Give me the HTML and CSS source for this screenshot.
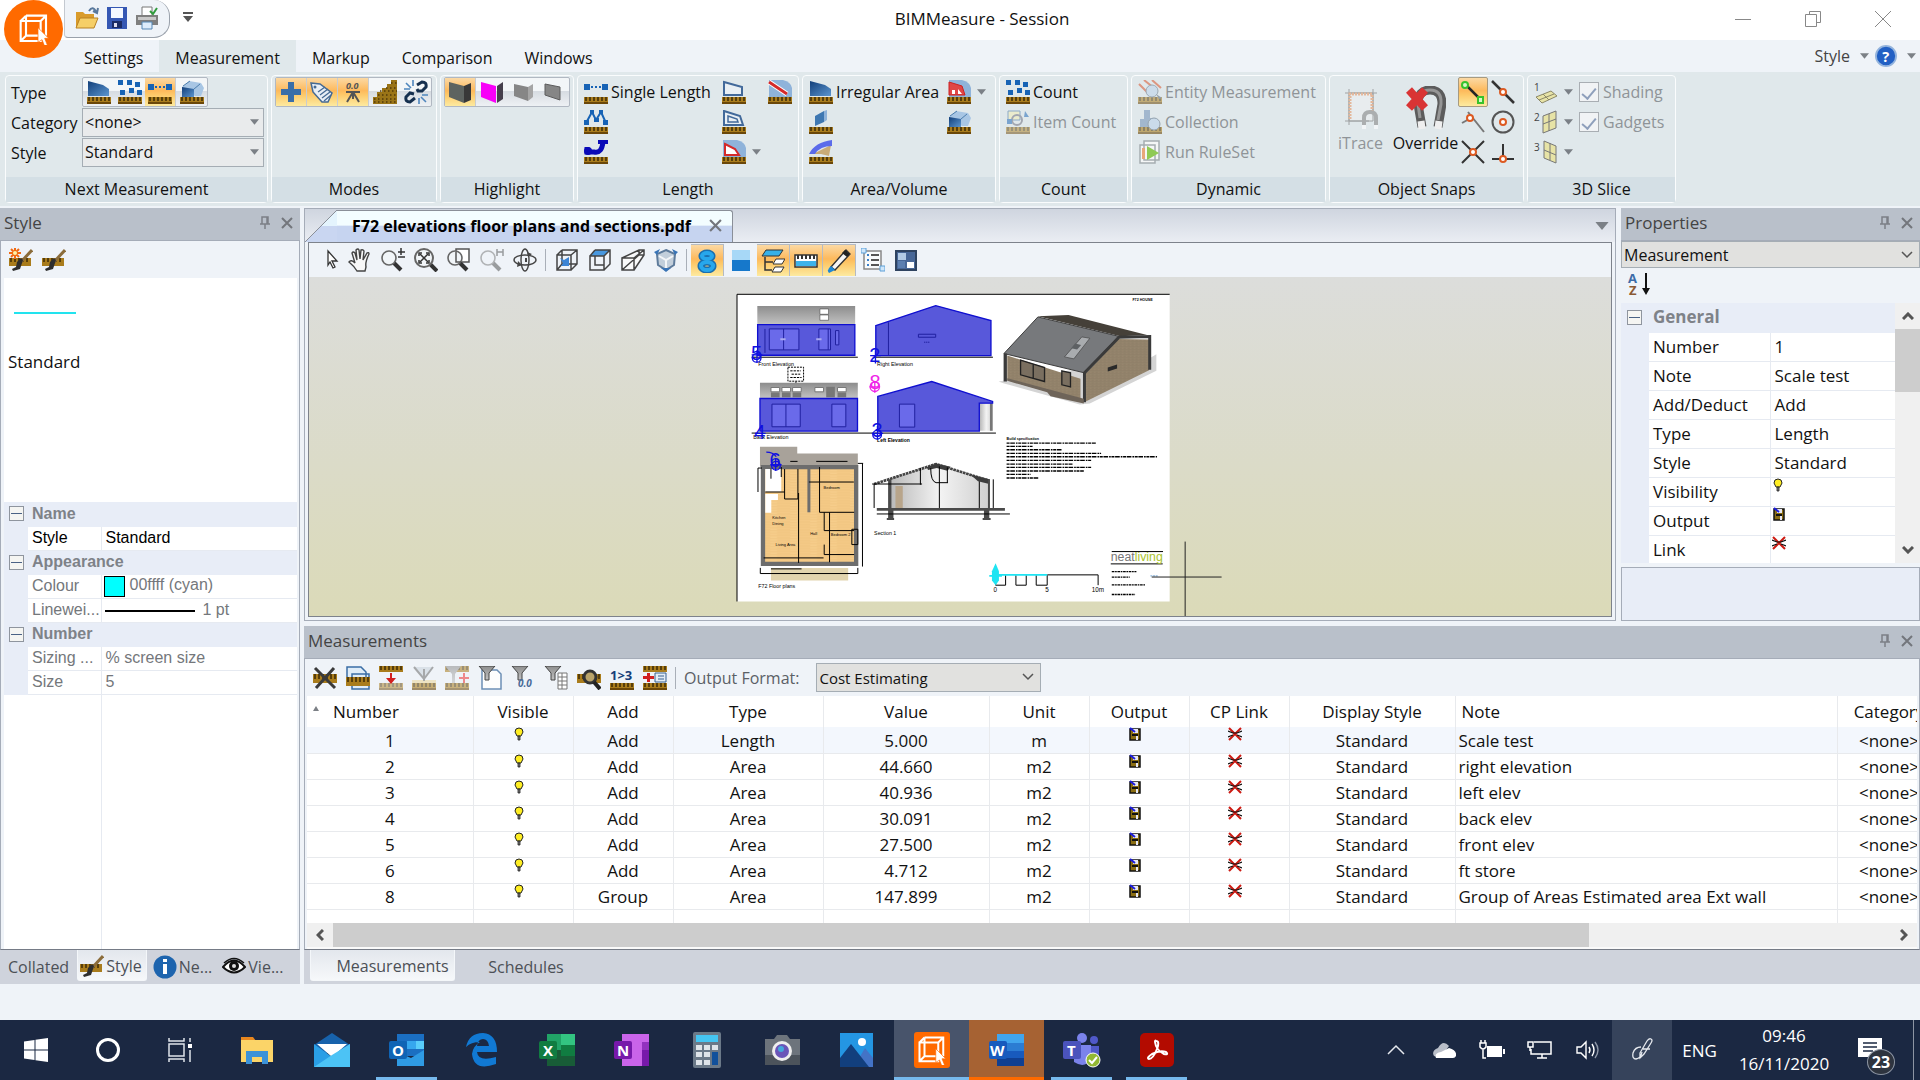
FILE: index.html
```html
<!DOCTYPE html>
<html lang="en">
<head>
  <meta charset="UTF-8">
  <meta name="viewport" content="width=device-width, initial-scale=1.0">
  <title>BIMMeasure - Session</title>
  <link rel="stylesheet" href="styles.css">
</head>
<body>
  <!-- icon sprite -->
  <svg class="sprite" aria-hidden="true">
    <defs>
      <linearGradient id="gBlue" x1="0" y1="0" x2="1" y2="1"><stop offset="0" stop-color="#123f7a"/><stop offset="1" stop-color="#5b95cf"/></linearGradient>
      <linearGradient id="gGrey" x1="0" y1="0" x2="0" y2="1"><stop offset="0" stop-color="#8d8d8d"/><stop offset="1" stop-color="#c2c2c2"/></linearGradient>
      <linearGradient id="gWall" x1="0" y1="0" x2="1" y2="0"><stop offset="0" stop-color="#b9b9b9"/><stop offset=".5" stop-color="#f3f3f3"/><stop offset="1" stop-color="#cfcfcf"/></linearGradient>
      <pattern id="pWood" width="60" height="8" patternUnits="userSpaceOnUse"><rect width="60" height="8" fill="#f6cd8b"/><path d="M0 2h60M20 6h40" stroke="#e8b76d"/></pattern>
      <pattern id="pBrick" width="12" height="8" patternUnits="userSpaceOnUse"><rect width="12" height="8" fill="#97866e"/><path d="M0 2h12M5 6h7" stroke="#7c6d58"/></pattern>
      <pattern id="pClad" width="6" height="6" patternUnits="userSpaceOnUse"><rect width="6" height="6" fill="#5a5adc"/><path d="M0 3h6" stroke="#4b4bcb"/></pattern>
    </defs>
    <symbol id="ruler" viewBox="0 0 24 24"><path fill="#a97c1c" d="M0 17h24v7H0z"/><path fill="#6b4708" d="M0 22h24v2H0z"/><path stroke="#3d2a06" stroke-width="1.5" d="M2 17v4M6 17v4M10 17v4M14 17v4M18 17v4M22 17v4"/></symbol>
    <symbol id="i-area" viewBox="0 0 24 24"><path fill="url(#gBlue)" d="M1 1l15 4 6 4v7H1z"/><use href="#ruler"/></symbol>
    <symbol id="i-count" viewBox="0 0 24 24"><path fill="#1763b5" d="M0 0h5v5H0zM9 0h5v5H9zM17 2h5v5h-5zM2 10h5v5H2zM11 8h5v5h-5zM19 10h5v5h-5z"/><use href="#ruler"/></symbol>
    <symbol id="i-line" viewBox="0 0 24 24"><path fill="#1763b5" d="M0 4h6v6H0zM18 4h6v6h-6z"/><path stroke="#1763b5" stroke-width="2" stroke-dasharray="2 2" d="M7 7h11"/><use href="#ruler"/></symbol>
    <symbol id="i-volume" viewBox="0 0 24 24"><path fill="#a8c6e4" d="M2 7l7-6 12 2 3 5-3 8h-6z"/><path fill="url(#gBlue)" d="M2 7l12 2v8H2z"/><path fill="none" stroke="#4e7fae" d="M14 9l6-5M3 6l7-5"/><use href="#ruler"/></symbol>
    <symbol id="i-poly" viewBox="0 0 24 24"><path fill="none" stroke="#1763b5" stroke-width="2" d="M2 13L8 2l4 8 5-8 5 11"/><path fill="#1763b5" d="M0 10h5v5H0zM6 0h4v4H6zM10 8h5v4h-5zM15 0h4v4h-4zM19 10h5v5h-5z"/><use href="#ruler"/></symbol>
    <symbol id="i-arc" viewBox="0 0 24 24"><path fill="none" stroke="#0a0ab8" stroke-width="5" d="M3 7v5h7q8 2 9-11"/><path fill="#0a0ab8" d="M14 0h10v4H14z"/><circle cx="4" cy="11" r="4" fill="#0a0ab8"/><use href="#ruler"/></symbol>
    <symbol id="i-perim" viewBox="0 0 24 24"><path fill="#e9eff4" stroke="#42699a" stroke-width="2" d="M2 2l18 5v8H2z"/><use href="#ruler"/></symbol>
    <symbol id="i-perim2" viewBox="0 0 24 24"><path fill="#e9eff4" stroke="#42699a" stroke-width="2" d="M2 1l16 5 3 9H2z"/><path fill="none" stroke="#42699a" stroke-width="1.5" d="M6 6l9 3 1 3H6z"/><use href="#ruler"/></symbol>
    <symbol id="i-redline" viewBox="0 0 24 24"><path fill="#8fb3da" d="M1 0h14q8 2 9 8v9H1z"/><path stroke="#fff" stroke-width="5" d="M1 2l18 12"/><path stroke="#d42a2a" stroke-width="3" d="M1 2l18 12"/><use href="#ruler"/></symbol>
    <symbol id="i-redpoly" viewBox="0 0 24 24"><path fill="#8fb3da" d="M1 0h14q8 2 9 8v9H1z"/><path fill="#fff" stroke="#d42a2a" stroke-width="2" d="M3 4l10 5 4 6H3z"/><use href="#ruler"/></symbol>
    <symbol id="i-redfill" viewBox="0 0 24 24"><path fill="#8fb3da" d="M2 0h13q8 2 9 8v9H2z"/><path fill="#e04646" stroke="#c22" d="M2 2l13 4 3 9H2z"/><path fill="#fff" d="M5 10h3v4H5zM11 9l4 5h-4z"/><use href="#ruler"/></symbol>
    <symbol id="i-wallarea" viewBox="0 0 24 24"><path fill="#3f78b2" d="M6 6l9-5v11l-9 4z"/><path fill="#8fb3da" d="M15 1l3-1v10l-3 2z"/><use href="#ruler"/></symbol>
    <symbol id="i-roof" viewBox="0 0 24 24"><path fill="#c9ab77" d="M4 14l18-9-2 11-8-2z"/><path fill="#5b6bea" d="M0 14Q6 2 23 0v6q-12 0-17 8z"/><use href="#ruler"/></symbol>
    <symbol id="i-item" viewBox="0 0 24 24"><g opacity=".5"><path fill="#f4eeb0" stroke="#3b6ea5" d="M2 1h12v9H2z"/><circle cx="11" cy="10" r="5" fill="none" stroke="#667" stroke-width="2"/><path fill="#1763b5" d="M19 1l4 6h-5zM1 9h5v5H1z"/><use href="#ruler"/></g></symbol>
    <symbol id="i-plus" viewBox="0 0 24 24"><path fill="#3a6ea8" d="M9 2h6v7h7v6h-7v7H9v-7H2V9h7z"/></symbol>
    <symbol id="i-tag" viewBox="0 0 24 24"><path fill="#e8eef5" stroke="#456a94" stroke-width="1.5" d="M1 3l9 1 12 9-4 9-6 0L3 12z"/><path stroke="#456a94" stroke-width="1.3" d="M8 12l7-5M10 15l8-6M12 18l8-6M14 21l7-6"/><circle cx="5" cy="7" r="1.5" fill="#456a94"/></symbol>
    <symbol id="i-steps" viewBox="0 0 24 24"><path fill="#9a7417" d="M0 24v-7h4v-5h5V8h5V4h4V0h6v24z"/><path stroke="#51390a" stroke-width="1.400" stroke-dasharray="1.500 2.500" d="M1 19h23M1 22h23M5 15h19M7 11h17M13 8h11M18 3h6"/></symbol>
    <symbol id="i-chain" viewBox="0 0 24 24"><g fill="none" stroke="#16304f" stroke-width="3"><path d="M10 14l-4-1-4 4q-1 5 4 5l5-4M13 9l1 2h4l4-4q1-5-4-5l-5 3"/></g><path stroke="#4f86bd" stroke-width="1.6" d="M2 3l5 5M9 0v6M0 9h6M22 22l-5-5M15 24v-6M24 15h-6"/></symbol>
    <symbol id="i-wall" viewBox="0 0 24 24"><path fill="#5d6360" d="M1 2l15 4v17L1 17z"/><path fill="#383838" d="M16 6l7-3v17l-7 3z"/></symbol>
    <symbol id="i-wallpink" viewBox="0 0 24 24"><path fill="#f800f8" d="M1 2l15 4v17L1 17z"/><path fill="#463f4c" d="M17 6l6-4v17l-6 4z"/></symbol>
    <symbol id="i-wallgrey" viewBox="0 0 24 24"><path fill="#868686" d="M3 4l14 3v14L3 16z"/><path fill="#a5a5a5" d="M17 7l5-3v13l-5 4z"/></symbol>
    <symbol id="i-wallthin" viewBox="0 0 24 24"><path fill="#868686" stroke="#5c5c5c" d="M3 4l15 3v13L3 15z"/></symbol>
    <symbol id="i-entity" viewBox="0 0 24 24"><g opacity=".55"><use href="#ruler"/><path stroke="#d9542b" stroke-width="2" d="M1 4l9 9M6 0l10 8M14 0l9 8"/><circle cx="14" cy="11" r="6" fill="#bcd3ea" stroke="#678"/><path fill="#567" d="M18 14l6 4-3 1z"/></g></symbol>
    <symbol id="i-collect" viewBox="0 0 24 24"><g opacity=".6"><use href="#ruler"/><path fill="#7a98bb" d="M6 0h6v8h6v9H2V9h4z"/><circle cx="16" cy="14" r="6" fill="#bcd3ea" stroke="#678"/></g></symbol>
    <symbol id="i-run" viewBox="0 0 24 24"><path fill="#f4f6f6" stroke="#a5adb1" stroke-width="1.5" d="M6 1h15v19H6zM2 5h15v18H2z"/><path fill="#e8a77a" d="M4 8h3v11H4z"/><path fill="#8fca55" d="M9 6l12 7-12 7z"/></symbol>
    <symbol id="i-drop" viewBox="0 0 10 6"><path fill="#7b8086" d="M0 0h10L5 6z"/></symbol>
    <symbol id="i-itrace" viewBox="0 0 36 42"><g opacity=".6"><path fill="#eef0f1" stroke="#777" d="M6 5h24v28H6zM2 5h32M2 33h24M6 1v36M30 1v24"/><path fill="none" stroke="#e59867" stroke-width="3" stroke-dasharray="2 1" d="M7 31V6h22v20"/><path fill="none" stroke="#888" stroke-width="4" d="M21 40V30q0-6 6-6t6 6v10"/><path stroke="#fff" stroke-width="4" d="M21 37v4M33 37v4"/></g></symbol>
    <symbol id="i-magnet" viewBox="0 0 40 46"><path fill="none" stroke="#5c5c5c" stroke-width="9" d="M16 41L12 18q0-14 12-14t12 14l-4 23"/><path fill="none" stroke="#969696" stroke-width="3" d="M14 32L12 18q0-14 12-14t11 14l-3 16"/><path stroke="#efefef" stroke-width="7" d="M15 35l1 8M33 35l-1 8"/><path stroke="#d93434" stroke-width="8" d="M3 4l16 18M19 4L3 22"/></symbol>
    <symbol id="i-snapend" viewBox="0 0 24 24"><path stroke="#262626" stroke-width="2.5" d="M5 5l14 14"/><g fill="#d9f7c8" stroke="#36c22c" stroke-width="2"><circle cx="4" cy="5" r="3"/><path d="M17 17h5v6h-5z"/></g></symbol>
    <symbol id="i-snapmid" viewBox="0 0 24 24"><path stroke="#333" stroke-width="2.5" d="M1 1l22 22"/><circle cx="12" cy="12" r="3" fill="#fff" stroke="#dd5a22" stroke-width="2"/></symbol>
    <symbol id="i-snapnear" viewBox="0 0 24 24"><path stroke="#777" stroke-width="2" d="M7 2l16 20M1 13l9-5"/><circle cx="9" cy="8" r="3" fill="#fff" stroke="#dd5a22" stroke-width="2"/></symbol>
    <symbol id="i-snapcen" viewBox="0 0 24 24"><circle cx="12" cy="12" r="10.500" fill="none" stroke="#555" stroke-width="2"/><circle cx="12" cy="12" r="3" fill="#fff" stroke="#dd5a22" stroke-width="2"/></symbol>
    <symbol id="i-snapint" viewBox="0 0 24 24"><path stroke="#333" stroke-width="2" d="M1 1l22 22M23 1L1 23"/><circle cx="12" cy="12" r="3" fill="#fff" stroke="#dd5a22" stroke-width="2"/></symbol>
    <symbol id="i-snapperp" viewBox="0 0 24 24"><path stroke="#333" stroke-width="2" d="M1 19h22M12 4v15"/><circle cx="12" cy="19" r="3" fill="#fff" stroke="#dd5a22" stroke-width="2"/></symbol>
    <symbol id="i-open" viewBox="0 0 24 24"><path fill="#d99b2b" d="M1 6h7l2 2h9v14H1z"/><path fill="#f6cf68" stroke="#b98122" d="M5 12h18l-4 10H1z"/><path fill="none" stroke="#59789c" stroke-width="2" d="M14 5q4-6 7 1M18 5l4 2 1-5"/></symbol>
    <symbol id="i-save" viewBox="0 0 24 24"><path fill="#3557b3" d="M2 1h20v22H2z"/><path fill="#f4f8ff" d="M6 2h12v10H6z"/><path fill="#1b2c66" d="M7 15h10v7H7z"/><path fill="#dde" d="M9 17h3v4H9z"/></symbol>
    <symbol id="i-print" viewBox="0 0 24 24"><path fill="#fff" stroke="#777" d="M7 1h10v9H7z"/><path fill="#7f7f7f" d="M1 9h22v10H1z"/><path fill="#c9c9c9" d="M3 11h18v3H3z"/><path fill="#dcecfb" stroke="#5587b5" d="M7 16h10v7H7z"/><path fill="none" stroke="#2f9b3b" stroke-width="2" d="M15 5l3 3 4-6"/></symbol>
    <symbol id="i-cubelogo" viewBox="0 0 24 24"><g fill="none" stroke="#fff" stroke-width="1.600"><path d="M2 6h15v15H2zM6 2h15v15M6 2v15h11M2 6l4-4M17 6l4-4M2 21l4-4"/></g><path fill="#fff" stroke="#ff6a00" stroke-width=".5" d="M15 11l8 8h-3l2 5-2 1-2-5-3 2z"/></symbol>
    <symbol id="i-pin" viewBox="0 0 12 14"><path fill="none" stroke="#7c7f86" stroke-width="1.500" d="M3 1h6v7H3zM8 1v7M1 8h10M6 8v5"/></symbol>
    <symbol id="i-x" viewBox="0 0 12 12"><path stroke="#73767c" stroke-width="2" d="M1 1l10 10M11 1L1 11"/></symbol>
    <symbol id="i-brush" viewBox="0 0 24 24"><path fill="#a97c1c" d="M0 10h22v8H0z"/><path stroke="#3d2a06" stroke-width="1.500" d="M2 10v4M6 10v4M10 10v4M14 10v4M18 10v4"/><path stroke="#8b6c3a" stroke-width="3" d="M23 2L12 14"/><path fill="#2e2e2e" d="M14 12l-3 9-7 2-1-2 4-2 1-5 4-4z"/></symbol>
    <symbol id="i-brushnew" viewBox="0 0 24 24"><use href="#i-brush"/><path stroke="#f26a12" stroke-width="2" d="M6 0v11M0 5h12M2 1l8 8M10 1L2 9"/><circle cx="6" cy="5" r="2" fill="#fff3a8"/></symbol>
    <symbol id="i-cursor" viewBox="0 0 24 24"><path fill="#fff" stroke="#333" stroke-width="1.300" d="M8 3l9 10h-5l3 6-2 1-3-6-2 3z"/></symbol>
    <symbol id="i-hand" viewBox="0 0 24 24"><path fill="#f8f8f8" stroke="#444" stroke-width="1.400" d="M9 23q-3-5-8-9 2-3 6 1L4 5q1-2 3 0l2 7-1-10q2-2 3 0l1 9 1-9q2-1 3 1l-1 9 4-7q2-1 2 1-4 8-3 13l-1 4z"/></symbol>
    <symbol id="i-lens" viewBox="0 0 24 24"><path stroke="#333" stroke-width="4" d="M13 15l7 7"/><circle cx="8" cy="10" r="7" fill="#f1f5f8" stroke="#666" stroke-width="1.600"/></symbol>
    <symbol id="i-zoomin" viewBox="0 0 24 24"><use href="#i-lens"/><path stroke="#333" stroke-width="1.500" d="M17 4h7M20 0v7M17 9h7"/></symbol>
    <symbol id="i-zoomall" viewBox="0 0 24 24"><path stroke="#333" stroke-width="4" d="M16 16l7 7"/><circle cx="10" cy="10" r="9" fill="#f1f5f8" stroke="#666" stroke-width="2"/><path stroke="#333" stroke-width="1.500" d="M6 6l8 8M14 6l-8 8"/><path fill="none" stroke="#333" stroke-width="1.500" d="M5 8V5h3M12 5h3v3M15 12v3h-3M8 15H5v-3"/></symbol>
    <symbol id="i-zoomwin" viewBox="0 0 24 24"><path fill="#fff" stroke="#555" stroke-width="1.500" d="M9 1h13v13H9z"/><use href="#i-lens"/><path fill="none" stroke="#555" stroke-width="1.500" d="M9 4v10h5"/></symbol>
    <symbol id="i-zoomh" viewBox="0 0 24 24"><g opacity=".45"><use href="#i-lens"/><path stroke="#333" stroke-width="1.500" d="M17 1v7M23 1v7M17 4h6"/></g></symbol>
    <symbol id="i-orbit" viewBox="0 0 24 24"><g fill="none" stroke="#444" stroke-width="1.400"><ellipse cx="12" cy="12" rx="11" ry="5"/><ellipse cx="12" cy="12" rx="4" ry="11"/></g><path fill="#444" d="M14 4l5 2-4 3zM5 13l4 4-5 2zM12 10v4h2v-4z"/></symbol>
    <symbol id="i-cubein" viewBox="0 0 24 24"><path fill="none" stroke="#444" stroke-width="1.500" d="M2 7h14v15H2zM7 2h15v14l-6 6M2 7l5-5M16 7l6-5M7 2v14h15M2 22l5-6"/><path fill="#3c84d4" d="M5 10l4 2 5-3v9H6l2-3z"/></symbol>
    <symbol id="i-cubetop" viewBox="0 0 24 24"><path fill="#4898df" d="M2 8l5-6h15l-6 6z"/><path fill="none" stroke="#444" stroke-width="1.500" d="M2 8h14v14H2zM7 2h15v14l-6 6M2 8l5-6M16 8l6-6M7 8v9h9"/></symbol>
    <symbol id="i-persp" viewBox="0 0 24 24"><path fill="#fafafa" stroke="#444" stroke-width="1.500" d="M1 10h12v12H1zM1 10L18 2h5v5L13 22M13 10l10-8M1 22L18 7V2M18 7h5"/></symbol>
    <symbol id="i-cubesel" viewBox="0 0 24 24"><path fill="#c3cfdb" stroke="#5e7b9b" stroke-width="2" d="M12 2l9 4-1 11-8 5-8-5L3 6z"/><path fill="none" stroke="#f4f6f8" stroke-width="2" d="M5 8l7 4 7-4M12 12v8"/><path fill="#3974b6" d="M0 4l6-3-3 6zM24 4l-6-3 3 6zM12 24l-5-4h10z"/></symbol>
    <symbol id="i-eight" viewBox="0 0 24 24"><g fill="none" stroke="#1b6fae" stroke-width="7"><ellipse cx="12" cy="7" rx="5" ry="3"/><ellipse cx="12" cy="17" rx="6" ry="4"/></g><g fill="none" stroke="#27a7ec" stroke-width="4"><ellipse cx="12" cy="7" rx="5" ry="3"/><ellipse cx="12" cy="17" rx="6" ry="4"/></g></symbol>
    <symbol id="i-water" viewBox="0 0 24 24"><path fill="#a7d8f7" d="M3 2h18v10H3z"/><path fill="#1678cb" d="M3 12h18v11H3z"/></symbol>
    <symbol id="i-layers" viewBox="0 0 24 24"><path fill="#38b1e8" stroke="#333" d="M5 1h17l-4 6H1z"/><path fill="none" stroke="#333" stroke-width="1.500" d="M4 8v13h7M4 13h8"/><path fill="#fff" stroke="#333" d="M15 10h9l-3 5h-9zM14 18h9l-3 5h-9z"/></symbol>
    <symbol id="i-scale" viewBox="0 0 24 24"><path fill="#fff" stroke="#333" stroke-width="1.500" d="M1 6h22v12H1z"/><path fill="#3eb3ea" d="M2 12h20v5H2z"/><path stroke="#333" stroke-width="2" d="M4 6v4M8 6v4M12 6v4M16 6v4M20 6v4"/></symbol>
    <symbol id="i-pencil" viewBox="0 0 24 24"><path fill="#f6f6f6" stroke="#333" stroke-width="1.400" d="M19 1l4 4L8 21l-4-3z"/><path fill="#222" d="M18 1l5 4-3 3-5-4z"/><path fill="#1e88d4" d="M4 17l4 4-6 3q-3-3 2-7z"/></symbol>
    <symbol id="i-tree" viewBox="0 0 24 24"><path fill="#f8fafb" stroke="#888" stroke-width="1.500" d="M3 3h17v18H3z"/><path stroke="#555" stroke-width="2" d="M10 7h8M10 12h8M10 17h8"/><path stroke="#3a7fca" stroke-width="2" d="M6 7h2M6 12h2M6 17h2"/><path fill="#cfe6fa" stroke="#5da0d8" d="M0 0h5v5H0zM19 18h5v5h-5z"/></symbol>
    <symbol id="i-sheet" viewBox="0 0 24 24"><path fill="#486797" stroke="#2f4360" stroke-width="2" d="M2 3h20v19H2z"/><path fill="#b3cbe5" d="M4 5h8v7H4z"/><path fill="#fff" d="M13 14h7v6h-7z"/><path fill="#5c7fb0" d="M4 13h7v7H4z"/></symbol>
    <symbol id="bar" viewBox="0 0 24 24"><path fill="#a97c1c" d="M0 8h24v9H0z"/><path stroke="#3d2a06" stroke-width="1.500" d="M2 8v5M6 8v5M10 8v5M14 8v5M18 8v5M22 8v5"/></symbol>
    <symbol id="bartop" viewBox="0 0 24 24"><path fill="#a97c1c" d="M0 0h24v6H0z"/><path stroke="#3d2a06" stroke-width="1.500" d="M2 0v4M6 0v4M10 0v4M14 0v4M18 0v4M22 0v4"/></symbol>
    <symbol id="i-mdel" viewBox="0 0 24 24"><use href="#bar"/><path stroke="#3a3a3a" stroke-width="3" d="M2 2l20 20M21 2L3 22"/></symbol>
    <symbol id="i-mcopy" viewBox="0 0 24 24"><path fill="#dfecf8" stroke="#3b6ea5" stroke-width="1.500" d="M1 1h14l5 5v12H1zM6 8h17v15H6z"/><use href="#bar" y="3"/></symbol>
    <symbol id="i-minsert" viewBox="0 0 24 24"><use href="#bartop"/><g opacity=".5"><use href="#ruler"/></g><path fill="#d21f1f" d="M11 7h2v5h4l-5 6-5-6h4z"/></symbol>
    <symbol id="i-mmerge" viewBox="0 0 24 24"><g opacity=".6"><use href="#ruler"/><path fill="#ecd9a2" d="M0 14h24v3H0z"/><path fill="#cdd6df" stroke="#777" stroke-width="2" d="M2 1l10 12L21 1M12 3v12"/></g></symbol>
    <symbol id="i-mfilt" viewBox="0 0 24 24"><g opacity=".55"><use href="#ruler"/><use href="#bartop"/><path fill="url(#gGrey)" d="M0 0h16l-6 8v9H7V8z"/><path fill="#e33" d="M18 7h2v4h4v2h-4v4h-2v-4h-4v-2h4z"/></g></symbol>
    <symbol id="funnel" viewBox="0 0 24 24"><path fill="url(#gGrey)" stroke="#444" d="M1 0h16l-6 7v7H7V7z"/></symbol>
    <symbol id="i-mfpage" viewBox="0 0 24 24"><path fill="#fdfdfd" stroke="#6c8fb5" stroke-width="1.500" d="M4 4h15l4 4v15H4z"/><use href="#funnel"/></symbol>
    <symbol id="i-mfgrid" viewBox="0 0 24 24"><path fill="#fff" stroke="#777" d="M14 7h9v16h-9zM14 11h9M14 15h9M14 19h9M18 7v16"/><use href="#funnel"/></symbol>
    <symbol id="i-mfind" viewBox="0 0 24 24"><use href="#bar"/><circle cx="13" cy="11" r="6" fill="#b9a36a" stroke="#333" stroke-width="3"/><path stroke="#222" stroke-width="4" d="M17 16l6 7"/></symbol>
    <symbol id="i-madd" viewBox="0 0 24 24"><use href="#bartop"/><use href="#ruler"/><path fill="#d21f1f" d="M4 7h3v3h4v3H7v3H4v-3H0v-3h4z"/><path fill="#e3ecf5" stroke="#36618f" d="M12 7h11v9H12z"/><path stroke="#36618f" d="M15 10h6M15 13h6"/></symbol>
    <symbol id="i-bulb" viewBox="0 0 12 14"><path fill="#ffee22" stroke="#222" d="M6 1q4 0 4 4l-2 4H4L2 5q0-4 4-4z"/><path fill="#777" stroke="#222" stroke-width=".8" d="M5 9h2v4H5z"/></symbol>
    <symbol id="i-disk" viewBox="0 0 14 14"><path fill="#8a6d12" stroke="#111" stroke-width="1.500" d="M2 2h10v11H2z"/><path fill="#e8e8f4" d="M5 2h5v4H5zM8 9h2v4H8z"/><path fill="#111" d="M4 7h6v2H4z"/><path stroke="#1a1ae0" stroke-width="2" d="M2 1l5 4"/></symbol>
    <symbol id="i-cut" viewBox="0 0 14 14"><path stroke="#cc1a12" stroke-width="2" d="M1 1l12 12M13 1L1 13"/><path fill="none" stroke="#111" stroke-width="1.200" d="M0 4l5 2h4l5-2M0 10l5-2M14 10L9 8"/></symbol>
    <symbol id="i-info" viewBox="0 0 24 24"><circle cx="12" cy="12" r="11.500" fill="#1d64ae"/><path fill="#fff" d="M10 9h4v10h-4zM10 4h4v3h-4z"/></symbol>
    <symbol id="i-eye" viewBox="0 0 24 24"><path fill="#fff" stroke="#111" stroke-width="2" d="M1 12q11-13 22 0-11 11-22 0z"/><circle cx="12" cy="11" r="5" fill="#111"/><circle cx="12" cy="11" r="2" fill="#ddd"/><path fill="none" stroke="#111" stroke-width="1.500" d="M2 8Q12-1 22 8"/></symbol>
    <symbol id="i-chev" viewBox="0 0 12 8"><path fill="none" stroke="#555" stroke-width="1.500" d="M1 1l5 5 5-5"/></symbol>
    <symbol id="i-chevb" viewBox="0 0 12 8"><path fill="none" stroke="#555" stroke-width="3" d="M1 1l5 5 5-5"/></symbol>
  </svg>

  <header class="titlebar">
    <button class="app-button" aria-label="Application menu"><svg width="32" height="32"><use href="#i-cubelogo"/></svg></button>
    <div class="quick-access">
      <button aria-label="Open"><svg width="24" height="24"><use href="#i-open"/></svg></button>
      <button aria-label="Save"><svg width="24" height="24"><use href="#i-save"/></svg></button>
      <button aria-label="Print"><svg width="24" height="24"><use href="#i-print"/></svg></button>
    </div>
    <button class="qa-more" aria-label="Customise"><svg width="10" height="10" viewBox="0 0 10 10"><path fill="#555" d="M0 0h10v2H0zM0 4h10L5 10z"/></svg></button>
    <h1>BIMMeasure - Session</h1>
    <div class="window-controls">
      <button aria-label="Minimise"><svg width="16" height="16" viewBox="0 0 16 16"><path stroke="#888" d="M0 8.500h16"/></svg></button>
      <button aria-label="Restore"><svg width="16" height="16" viewBox="0 0 16 16"><path fill="none" stroke="#888" d="M.5 3.500h11v12H.5zM4.500 3V.5h11v11H12"/></svg></button>
      <button aria-label="Close"><svg width="16" height="16" viewBox="0 0 16 16"><path stroke="#888" d="M0 0l16 16M16 0L0 16"/></svg></button>
    </div>
  </header>

  <nav class="ribbon-tabs">
    <a href="#">Settings</a>
    <a href="#" class="active">Measurement</a>
    <a href="#">Markup</a>
    <a href="#">Comparison</a>
    <a href="#">Windows</a>
    <div class="ribbon-help">
      <button>Style <svg width="9" height="6"><use href="#i-drop"/></svg></button>
      <button aria-label="Help"><svg width="22" height="22" viewBox="0 0 24 24"><circle cx="12" cy="12" r="11" fill="#2260c4" stroke="#94b4dd" stroke-width="2"/><text x="8" y="18" font-size="16" font-weight="700" fill="#fff">?</text></svg> <svg width="9" height="6"><use href="#i-drop"/></svg></button>
    </div>
  </nav>

  <section class="ribbon">
    <div class="group g-next">
      <div class="group-body form">
        <span>Type</span>
        <div class="btn-strip">
          <button aria-label="Area"><svg width="24" height="24"><use href="#i-area"/></svg></button>
          <button aria-label="Count"><svg width="24" height="24"><use href="#i-count"/></svg></button>
          <button class="on" aria-label="Length"><svg width="24" height="24"><use href="#i-line"/></svg></button>
          <button aria-label="Volume"><svg width="24" height="24"><use href="#i-volume"/></svg></button>
        </div>
        <label for="category">Category</label>
        <div class="combo"><select id="category"><option>&lt;none&gt;</option></select><svg width="9" height="6"><use href="#i-drop"/></svg></div>
        <label for="style">Style</label>
        <div class="combo"><select id="style"><option>Standard</option></select><svg width="9" height="6"><use href="#i-drop"/></svg></div>
      </div>
      <h2>Next Measurement</h2>
    </div>

    <div class="group g-modes">
      <div class="group-body">
        <div class="btn-strip">
          <button class="on" aria-label="Add"><svg width="24" height="24"><use href="#i-plus"/></svg></button>
          <button class="on" aria-label="Tag"><svg width="24" height="24"><use href="#i-tag"/></svg></button>
          <button class="on" aria-label="Level"><svg width="24" height="24" viewBox="0 0 24 24"><text x="5" y="9" font-size="9" font-weight="700" font-style="italic" fill="#555">0.0</text><path stroke="#555" stroke-width="2" fill="none" d="M5 12h14M12 12l-6 10M12 12l6 10M12 12v7"/></svg></button>
          <button aria-label="Steps"><svg width="24" height="24"><use href="#i-steps"/></svg></button>
          <button aria-label="Unlink"><svg width="24" height="24"><use href="#i-chain"/></svg></button>
        </div>
      </div>
      <h2>Modes</h2>
    </div>

    <div class="group g-highlight">
      <div class="group-body">
        <div class="btn-strip">
          <button class="on" aria-label="Solid"><svg width="24" height="24"><use href="#i-wall"/></svg></button>
          <button aria-label="Coloured"><svg width="24" height="24"><use href="#i-wallpink"/></svg></button>
          <button aria-label="Faded"><svg width="24" height="24"><use href="#i-wallgrey"/></svg></button>
          <button aria-label="Hidden"><svg width="24" height="24"><use href="#i-wallthin"/></svg></button>
        </div>
      </div>
      <h2>Highlight</h2>
    </div>

    <div class="group g-length">
      <div class="group-body columns">
        <div class="col c-wide">
          <button><svg width="24" height="24"><use href="#i-line"/></svg>Single Length</button>
          <button aria-label="Polyline"><svg width="24" height="24"><use href="#i-poly"/></svg></button>
          <button aria-label="Arc"><svg width="24" height="24"><use href="#i-arc"/></svg></button>
        </div>
        <div class="col c-mid">
          <button aria-label="Perimeter"><svg width="24" height="24"><use href="#i-perim"/></svg></button>
          <button aria-label="Inner perimeter"><svg width="24" height="24"><use href="#i-perim2"/></svg></button>
          <button class="split" aria-label="Face perimeter"><svg width="24" height="24"><use href="#i-redpoly"/></svg><svg width="9" height="6"><use href="#i-drop"/></svg></button>
        </div>
        <div class="col">
          <button aria-label="Edge"><svg width="24" height="24"><use href="#i-redline"/></svg></button>
        </div>
      </div>
      <h2>Length</h2>
    </div>

    <div class="group g-area">
      <div class="group-body columns">
        <div class="col c-wide">
          <button><svg width="24" height="24"><use href="#i-area"/></svg>Irregular Area</button>
          <button aria-label="Wall area"><svg width="24" height="24"><use href="#i-wallarea"/></svg></button>
          <button aria-label="Roof area"><svg width="24" height="24"><use href="#i-roof"/></svg></button>
        </div>
        <div class="col c-mid">
          <button class="split" aria-label="Face area"><svg width="24" height="24"><use href="#i-redfill"/></svg><svg width="9" height="6"><use href="#i-drop"/></svg></button>
          <button aria-label="Volume"><svg width="24" height="24"><use href="#i-volume"/></svg></button>
        </div>
      </div>
      <h2>Area/Volume</h2>
    </div>

    <div class="group g-count">
      <div class="group-body columns">
        <div class="col">
          <button><svg width="24" height="24"><use href="#i-count"/></svg>Count</button>
          <button disabled><svg width="24" height="24"><use href="#i-item"/></svg>Item Count</button>
        </div>
      </div>
      <h2>Count</h2>
    </div>

    <div class="group g-dynamic">
      <div class="group-body columns">
        <div class="col">
          <button disabled><svg width="24" height="24"><use href="#i-entity"/></svg>Entity Measurement</button>
          <button disabled><svg width="24" height="24"><use href="#i-collect"/></svg>Collection</button>
          <button disabled><svg width="24" height="24"><use href="#i-run"/></svg>Run RuleSet</button>
        </div>
      </div>
      <h2>Dynamic</h2>
    </div>

    <div class="group g-snaps">
      <div class="group-body columns">
        <button class="big" disabled><svg width="36" height="46"><use href="#i-itrace"/></svg>iTrace</button>
        <button class="big"><svg width="40" height="46"><use href="#i-magnet"/></svg>Override</button>
        <div class="snap-grid">
          <button class="on" aria-label="End point"><svg width="24" height="24"><use href="#i-snapend"/></svg></button>
          <button aria-label="Mid point"><svg width="24" height="24"><use href="#i-snapmid"/></svg></button>
          <button aria-label="Nearest"><svg width="24" height="24"><use href="#i-snapnear"/></svg></button>
          <button aria-label="Centre"><svg width="24" height="24"><use href="#i-snapcen"/></svg></button>
          <button aria-label="Intersection"><svg width="24" height="24"><use href="#i-snapint"/></svg></button>
          <button aria-label="Perpendicular"><svg width="24" height="24"><use href="#i-snapperp"/></svg></button>
        </div>
      </div>
      <h2>Object Snaps</h2>
    </div>

    <div class="group g-slice">
      <div class="group-body columns">
        <div class="col">
          <button class="split" aria-label="Slice 1"><svg width="24" height="24" viewBox="0 0 24 24"><text x="0" y="11" font-size="10" fill="#444">1</text><path fill="#e7e3a6" stroke="#8b8767" d="M2 17l15-6 6 5-15 7zM9 14l6 6M5 20l15-6"/></svg><svg width="9" height="6"><use href="#i-drop"/></svg></button>
          <button class="split" aria-label="Slice 2"><svg width="24" height="24" viewBox="0 0 24 24"><text x="0" y="11" font-size="10" fill="#444">2</text><path fill="#e7e3a6" stroke="#777" d="M9 6l13-5v17L9 23zM15 4v17M9 14l13-5"/></svg><svg width="9" height="6"><use href="#i-drop"/></svg></button>
          <button class="split" aria-label="Slice 3"><svg width="24" height="24" viewBox="0 0 24 24"><text x="0" y="11" font-size="10" fill="#444">3</text><path fill="#e7e3a6" stroke="#777" d="M10 1l12 5v17l-12-5zM16 3v17M10 10l12 5"/></svg><svg width="9" height="6"><use href="#i-drop"/></svg></button>
        </div>
        <div class="col">
          <label class="check"><input type="checkbox" checked disabled>Shading</label>
          <label class="check"><input type="checkbox" checked disabled>Gadgets</label>
        </div>
      </div>
      <h2>3D Slice</h2>
    </div>
  </section>

  <main class="workspace">
    <aside class="side-panel">
      <div class="panel-head">
        <h3>Style</h3>
        <button aria-label="Pin"><svg width="12" height="14"><use href="#i-pin"/></svg></button>
        <button aria-label="Close"><svg width="12" height="12"><use href="#i-x"/></svg></button>
      </div>
      <div class="side-body">
        <div class="toolbar">
          <button aria-label="New style"><svg width="24" height="24"><use href="#i-brushnew"/></svg></button>
          <button aria-label="Edit style"><svg width="24" height="24"><use href="#i-brush"/></svg></button>
        </div>
        <div class="style-list">
          <i class="swatch-line"></i>
          <span>Standard</span>
        </div>
        <div class="style-props-wrap">
          <table class="props style-props">
            <colgroup><col class="gutter"><col class="name"><col></colgroup>
            <tr class="head"><td><i class="box"></i></td><th colspan="2">Name</th></tr>
            <tr class="live"><td></td><td>Style</td><td>Standard</td></tr>
            <tr class="head"><td><i class="box"></i></td><th colspan="2">Appearance</th></tr>
            <tr><td></td><td>Colour</td><td class="flush"><i class="cyan"></i>00ffff (cyan)</td></tr>
            <tr><td></td><td>Linewei...</td><td class="flush"><i class="weight"></i>1 pt</td></tr>
            <tr class="head"><td><i class="box"></i></td><th colspan="2">Number</th></tr>
            <tr><td></td><td>Sizing ...</td><td>% screen size</td></tr>
            <tr><td></td><td>Size</td><td>5</td></tr>
          </table>
        </div>
      </div>
      <div class="bottom-tabs">
        <button>Collated</button>
        <button class="active"><svg width="24" height="24"><use href="#i-brush"/></svg>Style</button>
        <button><svg width="24" height="24"><use href="#i-info"/></svg>Ne...</button>
        <button><svg width="24" height="24"><use href="#i-eye"/></svg>Vie...</button>
      </div>
    </aside>

    <div class="centre">
      <div class="upper">
        <section class="document">
          <div class="doc-tabs">
            <svg class="slope" width="32" height="32" viewBox="0 0 32 32"><path fill="#e4f4fd" d="M0 32L32 0v32z"/><path fill="#c9d6f1" d="M0 32l16-16h16v16z"/><path fill="none" stroke="#8a8f98" d="M0 32L32 0"/></svg>
            <div class="doc-tab">F72 elevations floor plans and sections.pdf<button aria-label="Close tab"><svg width="13" height="13"><use href="#i-x"/></svg></button></div>
            <button class="doc-more" aria-label="Documents"><svg width="14" height="8" viewBox="0 0 10 6"><use href="#i-drop"/></svg></button>
          </div>
          <div class="doc-frame">
            <div class="toolbar view-tools">
              <button class="narrow" aria-label="Select"><svg width="24" height="24"><use href="#i-cursor"/></svg></button>
              <button aria-label="Pan"><svg width="24" height="24"><use href="#i-hand"/></svg></button>
              <button aria-label="Zoom"><svg width="24" height="24"><use href="#i-zoomin"/></svg></button>
              <button aria-label="Zoom extents"><svg width="24" height="24"><use href="#i-zoomall"/></svg></button>
              <button aria-label="Zoom window"><svg width="24" height="24"><use href="#i-zoomwin"/></svg></button>
              <button aria-label="Zoom highlighted"><svg width="24" height="24"><use href="#i-zoomh"/></svg></button>
              <button aria-label="Orbit"><svg width="24" height="24"><use href="#i-orbit"/></svg></button>
              <i class="sep"></i>
              <button aria-label="Views"><svg width="24" height="24"><use href="#i-cubein"/></svg></button>
              <button aria-label="Top"><svg width="24" height="24"><use href="#i-cubetop"/></svg></button>
              <button aria-label="Perspective"><svg width="24" height="24"><use href="#i-persp"/></svg></button>
              <button aria-label="Isolate"><svg width="24" height="24"><use href="#i-cubesel"/></svg></button>
              <i class="sep"></i>
              <button class="on" aria-label="Numbers"><svg width="24" height="24"><use href="#i-eight"/></svg></button>
              <button aria-label="Background"><svg width="24" height="24"><use href="#i-water"/></svg></button>
              <button class="on" aria-label="Layers"><svg width="24" height="24"><use href="#i-layers"/></svg></button>
              <button class="on" aria-label="Measurements"><svg width="24" height="24"><use href="#i-scale"/></svg></button>
              <button class="on" aria-label="Markup"><svg width="24" height="24"><use href="#i-pencil"/></svg></button>
              <button aria-label="Tree"><svg width="24" height="24"><use href="#i-tree"/></svg></button>
              <button aria-label="Sheets"><svg width="24" height="24"><use href="#i-sheet"/></svg></button>
            </div>
            <div class="canvas">
              <svg viewBox="0 0 1304 341" preserveAspectRatio="xMidYMin slice">
                <g transform="translate(422 8) scale(.33333)">
                  <path fill="#fff" d="M20 28h1300v923H20z"/>
                  <path fill="none" stroke="#000" stroke-width="3" d="M20 951V28h1300"/>
                  <text x="1208" y="48" font-size="11" font-weight="700">F72 HOUSE</text>

                  <!-- front elevation -->
                  <path fill="url(#gGrey)" d="M81 63h294v56H81z"/>
                  <path fill="#fff" stroke="#555" stroke-width="2" d="M269 72h26v16h-26zM269 90h26v16h-26z"/>
                  <path fill="url(#pClad)" stroke="#0f0fd0" stroke-width="4" d="M82 119h292v92H82z"/>
                  <path fill="#6a6aea" stroke="#2020a0" stroke-width="3" d="M117 132h89v63h-89zM160 132v63M266 132h35v63h-35zM316 137h10v43h-10z"/>
                  <path stroke="#2020a0" stroke-width="3" d="M294 132v63M104 132v72"/>
                  <path fill="#a9a9f0" d="M150 160h16v6h-16zM258 160h16v6h-16z"/>
                  <path stroke="#000" stroke-width="3" d="M64 217h319"/>
                  <text x="84" y="243" font-size="16">Front Elevation</text>
                  <path fill="#fff" stroke="#000" stroke-width="3" stroke-dasharray="6 3" d="M173 247h47v42h-47z"/>
                  <path stroke="#000" stroke-width="3" stroke-dasharray="7 3" d="M180 258h32M184 268h26M180 278h34M197 290v12"/>

                  <!-- right elevation -->
                  <path fill="url(#pClad)" stroke="#0f0fd0" stroke-width="4" d="M437 122L617 62l166 45v105H437z"/>
                  <path fill="none" stroke="#2020a0" stroke-width="3" d="M475 112v100M565 148h52v9h-52z"/>
                  <path stroke="#2020a0" stroke-width="3" stroke-dasharray="4 2" d="M582 172h18"/>
                  <path stroke="#000" stroke-width="3" d="M428 217h361"/>
                  <text x="441" y="243" font-size="16">Right Elevation</text>

                  <!-- back elevation -->
                  <path fill="url(#gGrey)" d="M89 294h294v46H89z"/>
                  <path fill="#fff" stroke="#777" stroke-width="3" d="M122 308h26v13h-26zM155 308h26v13h-26zM187 308h26v13h-26zM254 308h26v13h-26zM322 308h26v13h-26z"/>
                  <path fill="#777" d="M122 323h26v14h-26zM155 323h26v14h-26zM187 323h26v14h-26zM288 306h26v31h-26zM322 323h26v14h-26z"/>
                  <path fill="url(#pClad)" stroke="#0f0fd0" stroke-width="4" d="M89 341h293v98H89z"/>
                  <path fill="#6a6aea" stroke="#2020a0" stroke-width="3" d="M125 358h85v68h-85zM167 358v68M305 358h42v68h-42z"/>
                  <path stroke="#000" stroke-width="3" d="M64 445h734"/>
                  <text x="69" y="463" font-size="16">Back Elevation</text>

                  <!-- left elevation -->
                  <path fill="url(#gWall)" d="M750 355h38v83h-38z"/>
                  <path fill="#777" d="M780 355h8v83h-8z"/>
                  <path fill="url(#pClad)" stroke="#0f0fd0" stroke-width="4" d="M443 335l162-45 183 60v5h-40v84H443z"/>
                  <path fill="#6a6aea" stroke="#2020a0" stroke-width="3" d="M508 358h46v69h-46z"/>
                  <text x="441" y="471" font-size="15" font-weight="700">Left Elevation</text>

                  <!-- perspective view -->
                  <path fill="#d4d4d4" d="M806 290l14 5 230 64 30-3 200-98v-50l-20 12z"/>
                  <path fill="#454039" d="M924 94l92-4 236 60-80 4z"/>
                  <path fill="url(#pBrick)" d="M1068 266l98-104 92 2v92l-190 94zM832 212l220 70v66l-220-62z"/>
                  <path fill="#77797c" stroke="#3c3c3c" stroke-width="3" d="M924 96l242 58-102 110-242-58z"/>
                  <path fill="none" stroke="#3a3a3a" stroke-width="9" d="M1064 352v-88l104-107 92-2v100"/>
                  <path stroke="#3a3a3a" stroke-width="10" d="M826 206v84"/>
                  <path fill="#7a6f60" stroke="#222" stroke-width="4" d="M872 226l72 22v42l-72-20zM910 237v44M996 258l26 6v42l-26-6z"/>
                  <path fill="#2a2a2a" d="M1134 248l28-9v12l-28 9z"/>
                  <path fill="#a9acaf" stroke="#444" stroke-width="2" d="M1004 216l52-60 24 4-48 62z"/>
                  <path fill="#5d6063" d="M1024 190l12-14 18 4-12 14z"/>
                  <path fill="#6e6459" d="M832 280l230 62v14l-100-22-10-12-120-34z"/>

                  <!-- floor plan -->
                  <path fill="#a8a29a" d="M89 486h112v20h182v40H89z"/>
                  <path fill="url(#pWood)" stroke="#6d6d6d" stroke-width="13" d="M98 547h280v291H98z"/>
                  <path fill="#fff" d="M105 553h48v68h-48zM105 628h38v18h-20v38h-18z"/>
                  <path fill="#e1d4ae" d="M122 850h232v38H122z"/>
                  <path stroke="#6d6d6d" stroke-width="9" d="M236 547v136"/>
                  <path fill="none" stroke="#000" stroke-width="3" d="M236 592h135M268 547v136h104M205 625v210M282 683v55h90M298 683v150M282 780v30h90M100 820h180M163 553v90h40v-90M105 622h58M122 582v-30M153 547v30M180 530h22M258 530h94M397 536v310M383 536h16M83 550v72M83 550h12M90 850v17h293v-17M122 853h92M383 734v46h-18v-46z"/>
                  <g font-size="12"><text x="126" y="702">Kitchen</text><text x="126" y="720">Dining</text><text x="136" y="784">Living Area</text><text x="240" y="752">Hall</text><text x="280" y="612">Bedroom</text><text x="302" y="755">Bedroom 2</text></g>
                  <text x="84" y="911" font-size="16">F72 Floor plans</text>

                  <!-- section -->
                  <path fill="url(#gWall)" d="M480 584l140-46 158 46v86H480z"/>
                  <path fill="#b8a58b" d="M496 604h22v66h-22z"/>
                  <path fill="none" stroke="#444" stroke-width="8" stroke-dasharray="8 2" d="M432 598l186-60 160 50"/>
                  <path fill="#3c3c3c" d="M590 548l28-12 44 10-10 12-32-8-26 6zM722 570l56 14v14l-34-8z"/>
                  <path fill="#4a4a4a" d="M474 584h10v90h-10zM774 584h6v90h-6zM440 670h385v8H440zM474 678h16v22h-16zM762 678h16v22h-16zM470 700h22v6h-22zM758 700h24v6h-24z"/>
                  <path fill="none" stroke="#000" stroke-width="3" d="M426 598h150M432 598v72M571 550v50M628 545v125M652 548v46M748 590v80M790 584v86M440 688h400M602 550q0 40 16 44h36"/>
                  <text x="432" y="750" font-size="16">Section 1</text>

                  <!-- notes -->
                  <text x="830" y="467" font-size="11" font-weight="700">Build specification</text>
                  <path stroke="#000" stroke-width="4" stroke-dasharray="9 2 14 3 5 2" d="M830 475h268M830 485h78M830 495h168M830 506h284M830 516h452M830 527h254M830 538h198M830 548h254M830 559h232M830 569h72M830 580h96"/>

                  <!-- scale bar -->
                  <path fill="none" stroke="#000" stroke-width="3" d="M797 871v31h30v-30M858 872v30h31v-30M919 872v30h33v-30M952 871h153v31"/>
                  <path stroke="#1fe4f2" stroke-width="5" d="M797 871h155M778 874h38"/>
                  <path fill="#1fe4f2" d="M797 836l10 24v28l-10 14-11-14v-28z"/>
                  <g font-size="19"><text x="791" y="923">0</text><text x="946" y="923">5</text><text x="1086" y="923">10m</text></g>

                  <!-- title block -->
                  <path stroke="#000" stroke-width="3" d="M1146 801h154M1143 838h156"/>
                  <text x="1143" y="829" font-size="37" fill="#777">neat<tspan fill="#a9c32c">living</tspan></text>
                  <path stroke="#000" stroke-width="4" stroke-dasharray="8 2 5 2" d="M1146 861h74M1146 878h54M1146 901h102M1146 930h70"/>
                  <path stroke="#8fb7dc" stroke-width="4" stroke-dasharray="6 2" d="M1262 874h24"/>

                  <!-- measurement numbers -->
                  <g class="marks" font-size="60"><text x="62" y="224">5</text><text x="417" y="230">2</text><text x="72" y="462">4</text><text x="424" y="456">3</text><text x="118" y="548">6</text><text class="group-mark" x="418" y="314">8</text></g>
                  <path fill="none" stroke="#0f0fe0" stroke-width="4" d="M64 210h32M80 196v38M420 212h32M436 196v40M74 446h32M425 446h34M442 424v40M120 540h34M136 520v38"/>
                  <g fill="none" stroke="#0f0fe0" stroke-width="4"><circle cx="79" cy="219" r="13"/><circle cx="441" cy="450" r="13"/><circle cx="137" cy="543" r="13"/><path d="M108 502q20 0 30 14"/></g>
                  <g fill="none" stroke="#f026e8" stroke-width="4"><circle cx="434" cy="306" r="14"/><path d="M418 306h32M434 290v34"/></g>
                </g>
                <path stroke="#222" d="M844 300.500h70M877.500 265v80"/>
              </svg>
            </div>
          </div>
        </section>

        <aside class="properties">
          <div class="panel-head">
            <h3>Properties</h3>
            <button aria-label="Pin"><svg width="12" height="14"><use href="#i-pin"/></svg></button>
            <button aria-label="Close"><svg width="12" height="12"><use href="#i-x"/></svg></button>
          </div>
          <div class="combo wide"><select aria-label="Object"><option>Measurement</option></select><svg width="12" height="8"><use href="#i-chev"/></svg></div>
          <div class="sort-row">
            <button aria-label="Sort"><svg width="24" height="24" viewBox="0 0 24 24"><text x="1" y="11" font-size="13" font-weight="700" fill="#3d6ca8">A</text><text x="2" y="23" font-size="13" font-weight="700" fill="#8a5a33">Z</text><path fill="#111" d="M18 1h2v15h3l-4 7-4-7h3z"/></svg></button>
          </div>
          <div class="props-scroll">
            <table class="props main-props">
              <colgroup><col class="gutter"><col class="name"><col></colgroup>
              <tr class="head"><td><i class="box"></i></td><th colspan="2">General</th></tr>
              <tr><td></td><td>Number</td><td>1</td></tr>
              <tr><td></td><td>Note</td><td>Scale test</td></tr>
              <tr><td></td><td>Add/Deduct</td><td>Add</td></tr>
              <tr><td></td><td>Type</td><td>Length</td></tr>
              <tr><td></td><td>Style</td><td>Standard</td></tr>
              <tr><td></td><td>Visibility</td><td class="icon"><svg width="12" height="14"><use href="#i-bulb"/></svg></td></tr>
              <tr><td></td><td>Output</td><td class="icon"><svg width="14" height="14"><use href="#i-disk"/></svg></td></tr>
              <tr><td></td><td>Link</td><td class="icon"><svg width="14" height="14"><use href="#i-cut"/></svg></td></tr>
            </table>
            <div class="scroll-v">
              <button class="up" aria-label="Scroll up"><svg width="12" height="8"><use href="#i-chevb"/></svg></button>
              <i class="thumb"></i>
              <button aria-label="Scroll down"><svg width="12" height="8"><use href="#i-chevb"/></svg></button>
            </div>
          </div>
          <div class="props-note"></div>
        </aside>
      </div>

      <section class="measurements">
        <div class="panel-head">
          <h3>Measurements</h3>
          <button aria-label="Pin"><svg width="12" height="14"><use href="#i-pin"/></svg></button>
          <button aria-label="Close"><svg width="12" height="12"><use href="#i-x"/></svg></button>
        </div>
        <div class="measure-body">
          <div class="toolbar">
            <button aria-label="Delete"><svg width="24" height="24"><use href="#i-mdel"/></svg></button>
            <button aria-label="Copy"><svg width="24" height="24"><use href="#i-mcopy"/></svg></button>
            <button aria-label="Insert"><svg width="24" height="24"><use href="#i-minsert"/></svg></button>
            <button aria-label="Merge" disabled><svg width="24" height="24"><use href="#i-mmerge"/></svg></button>
            <button aria-label="Add filter" disabled><svg width="24" height="24"><use href="#i-mfilt"/></svg></button>
            <button aria-label="Filter page"><svg width="24" height="24"><use href="#i-mfpage"/></svg></button>
            <button aria-label="Filter zero"><svg width="24" height="24" viewBox="0 0 24 24"><use href="#funnel"/><text x="7" y="21" font-size="10" font-weight="700" font-style="italic" fill="#4a6b98">0.0</text></svg></button>
            <button aria-label="Filter columns"><svg width="24" height="24"><use href="#i-mfgrid"/></svg></button>
            <button aria-label="Find"><svg width="24" height="24"><use href="#i-mfind"/></svg></button>
            <button aria-label="Renumber"><svg width="24" height="24" viewBox="0 0 24 24"><text x="0" y="14" font-size="13" font-weight="700" fill="#163e78">1&gt;3</text><use href="#ruler"/></svg></button>
            <button aria-label="Add note"><svg width="24" height="24"><use href="#i-madd"/></svg></button>
            <i class="sep"></i>
            <label for="format">Output Format:</label>
            <div class="combo format"><select id="format"><option>Cost Estimating</option></select><svg width="12" height="8"><use href="#i-chev"/></svg></div>
          </div>
          <div class="table-wrap">
            <table class="data">
              <colgroup><col class="w166"><col class="w100"><col class="w100"><col class="w150"><col class="w166"><col class="w100"><col class="w100"><col class="w100"><col class="w166"><col><col class="wcat"></colgroup>
              <thead>
                <tr><th class="num"><i class="sort"></i>Number</th><th>Visible</th><th>Add</th><th>Type</th><th>Value</th><th>Unit</th><th>Output</th><th>CP Link</th><th>Display Style</th><th class="left">Note</th><th>Category</th></tr>
              </thead>
              <tbody>
                <tr class="current"><td>1</td><td class="icon"><svg width="12" height="14"><use href="#i-bulb"/></svg></td><td>Add</td><td>Length</td><td>5.000</td><td>m</td><td class="icon"><svg width="14" height="14"><use href="#i-disk"/></svg></td><td class="icon"><svg width="14" height="14"><use href="#i-cut"/></svg></td><td>Standard</td><td class="left">Scale test</td><td>&lt;none&gt;</td></tr>
                <tr><td>2</td><td class="icon"><svg width="12" height="14"><use href="#i-bulb"/></svg></td><td>Add</td><td>Area</td><td>44.660</td><td>m2</td><td class="icon"><svg width="14" height="14"><use href="#i-disk"/></svg></td><td class="icon"><svg width="14" height="14"><use href="#i-cut"/></svg></td><td>Standard</td><td class="left">right elevation</td><td>&lt;none&gt;</td></tr>
                <tr><td>3</td><td class="icon"><svg width="12" height="14"><use href="#i-bulb"/></svg></td><td>Add</td><td>Area</td><td>40.936</td><td>m2</td><td class="icon"><svg width="14" height="14"><use href="#i-disk"/></svg></td><td class="icon"><svg width="14" height="14"><use href="#i-cut"/></svg></td><td>Standard</td><td class="left">left elev</td><td>&lt;none&gt;</td></tr>
                <tr><td>4</td><td class="icon"><svg width="12" height="14"><use href="#i-bulb"/></svg></td><td>Add</td><td>Area</td><td>30.091</td><td>m2</td><td class="icon"><svg width="14" height="14"><use href="#i-disk"/></svg></td><td class="icon"><svg width="14" height="14"><use href="#i-cut"/></svg></td><td>Standard</td><td class="left">back elev</td><td>&lt;none&gt;</td></tr>
                <tr><td>5</td><td class="icon"><svg width="12" height="14"><use href="#i-bulb"/></svg></td><td>Add</td><td>Area</td><td>27.500</td><td>m2</td><td class="icon"><svg width="14" height="14"><use href="#i-disk"/></svg></td><td class="icon"><svg width="14" height="14"><use href="#i-cut"/></svg></td><td>Standard</td><td class="left">front elev</td><td>&lt;none&gt;</td></tr>
                <tr><td>6</td><td class="icon"><svg width="12" height="14"><use href="#i-bulb"/></svg></td><td>Add</td><td>Area</td><td>4.712</td><td>m2</td><td class="icon"><svg width="14" height="14"><use href="#i-disk"/></svg></td><td class="icon"><svg width="14" height="14"><use href="#i-cut"/></svg></td><td>Standard</td><td class="left">ft store</td><td>&lt;none&gt;</td></tr>
                <tr><td>8</td><td class="icon"><svg width="12" height="14"><use href="#i-bulb"/></svg></td><td>Group</td><td>Area</td><td>147.899</td><td>m2</td><td class="icon"><svg width="14" height="14"><use href="#i-disk"/></svg></td><td class="icon"><svg width="14" height="14"><use href="#i-cut"/></svg></td><td>Standard</td><td class="left">Group of Areas Estimated area Ext wall</td><td>&lt;none&gt;</td></tr>
                <tr class="rest"><td></td><td></td><td></td><td></td><td></td><td></td><td></td><td></td><td></td><td></td><td></td></tr>
              </tbody>
            </table>
          </div>
          <div class="scroll-h">
            <button class="prev" aria-label="Scroll left"><svg width="12" height="8"><use href="#i-chevb"/></svg></button>
            <div class="track"><i class="thumb"></i></div>
            <button class="next" aria-label="Scroll right"><svg width="12" height="8"><use href="#i-chevb"/></svg></button>
          </div>
        </div>
        <div class="bottom-tabs roomy">
          <button class="active">Measurements</button>
          <button>Schedules</button>
        </div>
      </section>
    </div>
  </main>

  <div class="statusbar"></div>

  <footer class="taskbar">
    <div class="sys">
      <button aria-label="Start"><svg width="24" height="24" viewBox="0 0 24 24"><path fill="#fff" d="M0 3.500L10.500 2v9.500H0zM11.500 1.800L24 0v11.500H11.500zM0 12.500h10.500V22L0 20.500zM11.500 12.500H24V24l-12.500-1.800z"/></svg></button>
      <button aria-label="Search"><svg width="24" height="24" viewBox="0 0 24 24"><circle cx="12" cy="12" r="10.500" fill="none" stroke="#fff" stroke-width="3"/></svg></button>
      <button aria-label="Task view"><svg width="24" height="24" viewBox="0 0 24 24"><path fill="none" stroke="#dfe3ea" stroke-width="1.500" d="M1 6h15v12H1zM1 0v3h15V0M1 24v-3h15v3M22 0v4M22 12v12"/><path fill="#fff" d="M20 6h4v4h-4z"/></svg></button>
    </div>
    <button aria-label="File Explorer"><svg width="34" height="30" viewBox="0 0 34 30"><path fill="#e8871e" d="M1 2h12l3 4H1z"/><path fill="#fbd468" d="M1 5h32v22H1z"/><path fill="#3c92d8" d="M6 16h22v13h-6v-7h-10v7H6z"/></svg></button>
    <button aria-label="Mail"><svg width="36" height="36" viewBox="0 0 36 36"><path fill="#1762ab" d="M0 13L18 1l18 12v8H0z"/><path fill="#fff" d="M3 12h30L18 25z"/><path fill="#2a9fe6" d="M0 12l18 13 18-13v23H0z"/><path fill="#4cc3f5" d="M0 35l18-12 18-11v23z"/></svg></button>
    <button class="open" aria-label="Outlook"><svg width="36" height="36" viewBox="0 0 36 36"><path fill="#1b6fc2" d="M8 2h27v22H8z"/><path fill="#36a7ee" d="M18 9h9v8h-9z"/><path fill="#59cdfa" d="M27 9h8v8h-8z"/><path fill="#2f9be4" d="M8 20l14 6 13-8v16H8z"/><rect y="9" width="18" height="18" rx="2" fill="#0f64b5"/><text x="3" y="24" font-size="15" font-weight="700" fill="#fff">O</text></svg></button>
    <button aria-label="Edge"><svg width="32" height="36" viewBox="0 0 32 36"><path fill="#1179d3" d="M0 15Q3 1 17 1q14 1 14 19H11q1 10 19 5v7Q8 40 6 22 7 14 14 10 5 10 0 15zM11 14h12q-1-7-6-7t-6 7z"/></svg></button>
    <button aria-label="Excel"><svg width="36" height="36" viewBox="0 0 36 36"><path fill="#21a366" d="M8 2h14v16H8z"/><path fill="#33c481" d="M22 2h14v11H22z"/><path fill="#107c41" d="M22 13h14v11H22z"/><path fill="#185c37" d="M8 18h14v6h14v10H8z"/><rect y="9" width="18" height="18" rx="2" fill="#107c41"/><text x="4" y="24" font-size="15" font-weight="700" fill="#fff">X</text></svg></button>
    <button aria-label="OneNote"><svg width="36" height="36" viewBox="0 0 36 36"><path fill="#ca64ea" d="M8 2h27v32H8z"/><path fill="#9332bf" d="M28 10h7v8h-7z"/><path fill="#7719aa" d="M28 18h7v16h-7z"/><rect y="9" width="18" height="18" rx="2" fill="#7719aa"/><text x="3" y="24" font-size="15" font-weight="700" fill="#fff">N</text></svg></button>
    <button aria-label="Calculator"><svg width="28" height="36" viewBox="0 0 28 36"><rect width="28" height="36" rx="2" fill="#6b7988"/><path fill="#45c5f2" d="M3 3h22v7H3z"/><path fill="#dfe4e9" d="M3 13h6v5H3zM11 13h6v5h-6zM19 13h6v5h-6zM3 20h6v5H3zM11 20h6v5h-6zM3 28h6v5H3zM11 28h6v5h-6z"/><path fill="#11509b" d="M19 20h6v13h-6z"/></svg></button>
    <button aria-label="Camera"><svg width="36" height="34" viewBox="0 0 36 34"><path fill="#6d747c" d="M1 6h9l3-4h10l3 4h10v26H1z"/><path fill="#4c535b" d="M1 22h35v10H1z"/><circle cx="18" cy="18" r="10" fill="#eee"/><circle cx="18" cy="18" r="7" fill="#6a55b8"/><circle cx="17" cy="16" r="3" fill="#45a7dc"/></svg></button>
    <button aria-label="Photos"><svg width="33" height="34" viewBox="0 0 33 34"><path fill="#2496e3" d="M0 0h33v34H0z"/><path fill="#4373c6" d="M14 34l11-19 8 10v9z"/><path fill="#123f7d" d="M0 25l11-14 18 23H0z"/><circle cx="22" cy="9" r="4" fill="#fff"/></svg></button>
    <button class="current" aria-label="BIMMeasure"><svg width="36" height="36" viewBox="0 0 36 36"><rect width="36" height="36" rx="3" fill="#ff6a00"/><use href="#i-cubelogo" x="3" y="3" width="30" height="30"/></svg></button>
    <button class="alert" aria-label="Word"><svg width="36" height="36" viewBox="0 0 36 36"><path fill="#41a5ee" d="M8 2h27v9H8z"/><path fill="#2b7cd3" d="M8 11h27v8H8z"/><path fill="#185abd" d="M8 19h27v7H8z"/><path fill="#103f91" d="M8 26h27v8H8z"/><rect y="9" width="18" height="18" rx="2" fill="#185abd"/><text x="1" y="24" font-size="15" font-weight="700" fill="#fff">W</text></svg></button>
    <button class="open" aria-label="Teams"><svg width="38" height="36" viewBox="0 0 38 36"><circle cx="19" cy="6" r="5" fill="#7b83eb"/><circle cx="31" cy="8" r="4" fill="#5059c9"/><path fill="#5059c9" d="M24 14h12v12q-6 6-12 2z"/><path fill="#7b83eb" d="M11 13h17v14q-6 10-17 3z"/><rect y="9" width="18" height="18" rx="2" fill="#4b53bc"/><text x="4" y="24" font-size="15" font-weight="700" fill="#fff">T</text><circle cx="30" cy="28" r="7" fill="#92b833" stroke="#fff"/><path fill="none" stroke="#fff" stroke-width="2" d="M26 28l3 3 5-6"/></svg></button>
    <button class="open" aria-label="Acrobat"><svg width="34" height="34" viewBox="0 0 34 34"><rect width="34" height="34" rx="5" fill="#b30b00"/><path fill="none" stroke="#fff" stroke-width="2" d="M16 8q4 0 1 8-4 10-8 10-3-1 3-5 8-4 14-2 3 3-2 2-8-4-9-12 0-2 1-1z"/></svg></button>

    <div class="tray">
      <button aria-label="Hidden icons"><svg width="18" height="12" viewBox="0 0 18 12"><path fill="none" stroke="#e6e9ee" stroke-width="1.500" d="M1 10l8-8 8 8"/></svg></button>
      <button aria-label="OneDrive"><svg width="24" height="18" viewBox="0 0 24 18"><path fill="#b9bec8" d="M2 15q-3-5 4-8 5-9 11-2l-9 12z"/><path fill="#fff" d="M4 17q-2-5 5-6l8-4q8 2 7 8-1 2-3 2z"/></svg></button>
      <button aria-label="Battery"><svg width="26" height="20" viewBox="0 0 26 20"><path fill="#fff" d="M8 6h15v11H8zM24 9h2v5h-2z"/><path fill="none" stroke="#fff" stroke-width="1.500" d="M1 3h6v4q-3 4-6 0zM2 0v3M6 0v3M4 9v9h3"/></svg></button>
      <button aria-label="Network"><svg width="26" height="20" viewBox="0 0 26 20"><path fill="none" stroke="#fff" stroke-width="1.500" d="M7 2h17v12H4V9M10 18h10M15 14v4M1 2h5v5H1zM3 7v4"/></svg></button>
      <button aria-label="Volume"><svg width="24" height="20" viewBox="0 0 24 20"><path fill="none" stroke="#fff" stroke-width="1.400" d="M1 7h4l5-5v16l-5-5H1zM13 7q2 3 0 6M16 4q4 6 0 12"/><path fill="none" stroke="#8d96a6" stroke-width="1.400" d="M19 2q6 8 0 16"/></svg></button>
      <button class="pen" aria-label="Ink workspace"><svg width="24" height="24" viewBox="0 0 24 24"><path fill="none" stroke="#e6e9ee" stroke-width="1.300" d="M10 15l7-12q2-3 4-2t0 4l-7 11-4 4zM13 11h7M11 9q-6 0-8 6-1 6 3 6 5-1 6-7"/></svg></button>
      <button class="lang">ENG</button>
      <button class="clock"><span>09:46</span><span>16/11/2020</span></button>
      <button class="notes" aria-label="Notifications"><svg width="24" height="24" viewBox="0 0 24 24"><path fill="#fff" d="M0 0h24v19h-6l-5 5v-5H0z"/><path stroke="#1b2842" stroke-width="1.500" d="M5 5h14M5 9h14M5 13h10"/></svg><span class="badge">23</span></button>
    </div>
  </footer>
</body>
</html>
```

FILE: styles.css
```css
* {
  margin: 0;
  padding: 0;
  box-sizing: border-box;
}

body {
  font-family: "Open Sans", "Noto Sans", sans-serif;
  font-size: 17px;
  color: #111;
  background: #eff3f8;
  height: 100vh;
  display: flex;
  flex-direction: column;
  overflow: hidden;
}

button,
select {
  font: inherit;
  color: inherit;
  border: 0;
  background: none;
}

button {
  display: flex;
  align-items: center;
  justify-content: center;
  white-space: nowrap;
}

svg {
  display: block;
  flex: none;
}

h1,
h2,
h3 {
  font-size: inherit;
  font-weight: 400;
}

.sprite {
  position: absolute;
  width: 0;
  height: 0;
}

/* title bar */
.titlebar {
  height: 40px;
  background: #fff;
  display: flex;
  align-items: flex-start;
  position: relative;
}

.app-button {
  position: absolute;
  left: 4px;
  top: 0;
  z-index: 2;
  width: 59px;
  height: 58px;
  border-radius: 50%;
  background: #ff6a00;
}

.quick-access {
  margin-left: 64px;
  width: 106px;
  height: 38px;
  padding: 0 10px 2px;
  display: flex;
  align-items: center;
  justify-content: space-between;
  background: #eff3f8;
  border: 1px solid #9aa1ab;
  border-top: 0;
  border-left-color: #c4c9d0;
  border-radius: 0 16px 16px 4px;
}

.qa-more {
  width: 36px;
  height: 34px;
}

.titlebar h1 {
  position: absolute;
  left: 0;
  right: 0;
  top: 0;
  line-height: 38px;
  padding-left: 44px;
  text-align: center;
  pointer-events: none;
}

.window-controls {
  margin-left: auto;
  padding-right: 2px;
  display: flex;
}

.window-controls button {
  width: 70px;
  height: 38px;
}

/* ribbon */
.ribbon-tabs {
  height: 32px;
  padding-left: 68px;
  display: flex;
  background: #eff3f8;
  font-size: 16px;
}

.ribbon-tabs a {
  padding: 0 16px;
  line-height: 36px;
  color: #111;
  text-decoration: none;
}

.ribbon-tabs a.active {
  background: #e0e8eb;
}

.ribbon-help {
  margin-left: auto;
  display: flex;
  align-items: center;
  gap: 6px;
  padding-right: 4px;
  color: #444;
}

.ribbon-help button {
  gap: 10px;
}

.ribbon {
  background: #e0e8eb;
  height: 134px;
  padding: 3px 5px;
  display: flex;
  gap: 3px;
  font-size: 16px;
}

.group {
  border: 1px solid #fafcfd;
  border-radius: 4px;
  display: flex;
  flex-direction: column;
  flex: none;
}

.group h2 {
  height: 25px;
  line-height: 24px;
  text-align: center;
  background: #d4dfe5;
}

.g-next { width: 263px; }
.g-modes { width: 166px; }
.g-highlight { width: 134px; }
.g-length { width: 222px; }
.g-area { width: 194px; }
.g-count { width: 129px; }
.g-dynamic { width: 195px; }
.g-snaps { width: 195px; }
.g-slice { width: 149px; }

.group-body {
  flex: 1;
  padding: 1px 3px 0;
}

.form {
  display: grid;
  grid-template-columns: 73px 1fr;
  grid-auto-rows: 30px;
  align-items: center;
}

.form > label,
.form > span {
  padding: 2px 0 0 2px;
}

.btn-strip {
  display: flex;
  width: max-content;
  height: 30px;
  border: 1px solid #b1b8c2;
  border-radius: 2px;
  background: linear-gradient(#f3f6f8 45%, #d6dbe1 46%, #eef1f4);
}

.btn-strip button {
  width: 31px;
}

.btn-strip .on,
.snap-grid .on,
.toolbar .on {
  background: linear-gradient(#fbd9a4, #fdb95c 45%, #fdc96a 60%, #fdeaa0);
}

.btn-strip .on {
  border-right: 1px solid #c9ccd0;
}

.snap-grid .on {
  border: 1px solid #a79a80;
  border-radius: 2px;
}

.combo {
  position: relative;
  height: 29px;
}

.combo select {
  appearance: none;
  width: 100%;
  height: 100%;
  padding: 0 2px;
  border: 1px solid #a5adb4;
  background: #e9ebec;
}

.combo svg {
  position: absolute;
  right: 5px;
  top: 11px;
  pointer-events: none;
}

.columns {
  display: flex;
}

.col {
  padding: 0 3px;
}

.col button {
  height: 30px;
  gap: 3px;
}

.c-wide {
  width: 138px;
}

.c-mid {
  width: 46px;
}

.col .split {
  gap: 6px;
}

button:disabled,
.check {
  color: #8f9498;
}

.big {
  flex-direction: column;
  width: 65px;
  height: 78px;
  padding-top: 8px;
}

.snap-grid {
  display: grid;
  grid-template-columns: 30px 30px;
  grid-auto-rows: 30px;
}

.g-snaps .group-body {
  padding: 1px 0 0;
  margin-left: -2px;
}

.check {
  height: 30px;
  display: flex;
  align-items: center;
  gap: 4px;
}

.check input {
  appearance: none;
  width: 20px;
  height: 20px;
  border: 1px solid #a9aeb3;
  background: #f1f3f5;
  display: flex;
  justify-content: center;
  align-items: center;
}

.check input::after {
  content: "";
  width: 6px;
  height: 12px;
  border: solid #8e9fbb;
  border-width: 0 2px 2px 0;
  rotate: 40deg;
}

/* panels */
.workspace {
  flex: 1;
  min-height: 0;
  display: flex;
  gap: 4px;
  padding-top: 2px;
}

.panel-head {
  height: 33px;
  flex: none;
  background: #b9c0ca;
  border-bottom: 1px solid #a5acb8;
  color: #444;
  display: flex;
  align-items: center;
  gap: 10px;
  padding: 0 7px 3px 4px;
}

.panel-head h3 {
  flex: 1;
}

.toolbar {
  height: 37px;
  flex: none;
  display: flex;
  align-items: center;
  background: #eff3f8;
}

.toolbar button {
  width: 33px;
  height: 32px;
}

.toolbar .narrow {
  width: 23px;
}

.toolbar .on {
  border: 1px solid #b5bac2;
  border-width: 1px 1px 0 0;
}

.sep {
  width: 1px;
  height: 22px;
  margin: 0 4px;
  background: #a9afb8;
}

.side-panel {
  width: 300px;
  display: flex;
  flex-direction: column;
}

.side-body {
  flex: 1;
  min-height: 0;
  display: flex;
  flex-direction: column;
  padding: 0 2px 0 3px;
  border-left: 1px solid #a5acb8;
  border-right: 1px solid #a5acb8;
  border-bottom: 1px solid #757b86;
}

.style-list {
  height: 224px;
  background: #fff;
  padding: 34px 4px 0;
}

.swatch-line {
  display: block;
  width: 62px;
  height: 2px;
  margin: 0 0 36px 6px;
  background: #22e3ee;
}

.style-props-wrap {
  flex: 1;
  background: linear-gradient(#e6eaf1, #e6eaf1) 97px 0 / 1px 100% no-repeat #fff;
}

.props {
  border-collapse: collapse;
  table-layout: fixed;
  width: 100%;
}

.props td,
.props th {
  text-align: left;
  background: #fff;
  border-bottom: 1px solid #e6eaf1;
  white-space: nowrap;
  line-height: 20px;
}

.props td + td {
  padding-left: 4px;
}

.props td + td + td {
  border-left: 1px solid #e6eaf1;
}

.props td:first-child,
.props .head td,
.props .head th {
  background: #e8edf7;
  border-color: #e8edf7;
}

.props th {
  color: #7e8288;
  padding-left: 4px;
}

.box {
  display: block;
  width: 15px;
  height: 15px;
  border: 1px solid #8f959e;
  background: linear-gradient(#4a6285, #4a6285) center / 11px 1px no-repeat #f5f5f2;
}

.style-props {
  font-family: "Liberation Sans", sans-serif;
  font-size: 16px;
  color: #74777b;
}

.style-props tr {
  height: 24px;
}

.style-props .gutter { width: 24px; }
.style-props .name { width: 73px; }
.style-props .live { color: #000; }
.style-props .box { margin-left: 5px; }

.props td.flush {
  padding-left: 2px;
}

.cyan {
  display: inline-block;
  width: 21px;
  height: 21px;
  margin-right: 5px;
  vertical-align: middle;
  background: #0ff;
  border: 1px solid #000;
}

.weight {
  display: inline-block;
  width: 90px;
  height: 2px;
  margin: 0 8px 0 1px;
  vertical-align: middle;
  background: #000;
}

.bottom-tabs {
  height: 34px;
  flex: none;
  display: flex;
  align-items: flex-start;
  gap: 4px;
  background: #cfd3dc;
  color: #4c5056;
  font-size: 16px;
  padding: 0 4px 0 6px;
}

.bottom-tabs button {
  height: 31px;
  padding: 2px 4px 0 2px;
  gap: 2px;
}

.bottom-tabs .active {
  background: linear-gradient(#e3e7ed, #f6f8fa);
  border: 1px solid #f4f7fa;
  border-top: 0;
  border-radius: 0 0 3px 3px;
}

.roomy button {
  width: 145px;
  padding-left: 24px;
}

.roomy button + button {
  width: 114px;
}

/* document */
.centre {
  flex: 1;
  min-width: 0;
  display: flex;
  flex-direction: column;
  gap: 5px;
}

.upper {
  height: 413px;
  display: flex;
  gap: 5px;
}

.document {
  flex: 1;
  min-width: 0;
  display: flex;
  flex-direction: column;
  border: 1px solid #a5acb8;
}

.doc-tabs {
  height: 33px;
  flex: none;
  display: flex;
  align-items: flex-end;
  background: linear-gradient(#cfd5df, #eaedf3);
}

.doc-tab {
  height: 32px;
  display: flex;
  align-items: center;
  gap: 18px;
  padding: 0 10px 2px 15px;
  font-weight: 700;
  font-size: 16px;
  color: #000;
  background: linear-gradient(#f3fdff 45%, #c6d4f0 50%);
  border: 1px solid #8a8f98;
  border-width: 1px 1px 0 0;
  border-radius: 0 3px 0 0;
}

.doc-more {
  margin-left: auto;
  width: 26px;
  height: 32px;
}

.doc-frame {
  flex: 1;
  min-height: 0;
  margin: 0 3px 3px;
  border: 1px solid #7d828b;
  display: flex;
  flex-direction: column;
}

.view-tools {
  height: 34px;
  padding: 0 0 1px 11px;
  align-items: flex-end;
}

.view-tools .sep {
  margin-bottom: 5px;
}

.canvas {
  flex: 1;
  min-height: 0;
  background: linear-gradient(#dcdddb, #dbdbc8 55%, #dbdab8);
}

.canvas svg {
  width: 100%;
  height: 100%;
  font-family: "Liberation Sans", sans-serif;
}

.marks {
  fill: #0f0fe0;
}

.group-mark {
  fill: #f026e8;
}

/* properties */
.properties {
  width: 299px;
  display: flex;
  flex-direction: column;
}

.wide {
  height: 27px;
  flex: none;
  font-size: 16px;
}

.wide select {
  background: #e1e1df;
}

.wide svg,
.format svg {
  right: 7px;
  top: 10px;
}

.sort-row {
  height: 35px;
  padding: 4px 6px;
}

.props-scroll {
  display: flex;
  height: 260px;
  overflow: hidden;
}

.main-props {
  width: auto;
  flex: 1;
}

.main-props tr {
  height: 29px;
}

.main-props .gutter { width: 28px; }
.main-props .name { width: 121px; }
.main-props .box { margin-left: 6px; }

.main-props td.icon {
  vertical-align: top;
  padding-left: 1px;
}

.scroll-v {
  width: 25px;
  background: #f0f0f0;
  display: flex;
  flex-direction: column;
}

.scroll-v button {
  width: 25px;
  height: 26px;
}

.scroll-v .up svg {
  rotate: 180deg;
}

.scroll-v .thumb {
  height: 63px;
  margin-bottom: auto;
  background: #cdcdcd;
}

.props-note {
  flex: 1;
  margin-top: 4px;
  background: #e8edf7;
  border: 1px solid #a5acb8;
}

/* measurements */
.measurements {
  flex: 1;
  min-height: 0;
  display: flex;
  flex-direction: column;
}

.measure-body {
  flex: 1;
  min-height: 0;
  display: flex;
  flex-direction: column;
  padding: 0 2px;
  border-left: 1px solid #a5acb8;
  border-right: 1px solid #a5acb8;
  border-bottom: 1px solid #757b86;
}

.measure-body .toolbar {
  padding-left: 1px;
  font-size: 16px;
}

.toolbar label {
  margin-left: 4px;
  color: #5b6066;
}

.format {
  width: 225px;
  margin-left: 17px;
}

.format select {
  background: #e1e1df;
  font-size: 15px;
}

.table-wrap {
  flex: 1;
  min-height: 0;
  overflow: hidden;
  background: #fff;
}

.data {
  width: calc(100% + 24px);
  height: 100%;
  border-collapse: collapse;
  table-layout: fixed;
}

.w100 { width: 100px; }
.w150 { width: 150px; }
.w166 { width: 166px; }
.wcat { width: 103px; }

.data th,
.data td {
  font-weight: 400;
  text-align: center;
  white-space: nowrap;
  border-right: 1px solid #e8eaed;
}

.data th {
  height: 31px;
}

.data td {
  height: 26px;
  line-height: 22px;
  border-bottom: 1px solid #e8eaed;
  padding-top: 2px;
}

.data .current td {
  background: #f3f7fd;
}

.data .rest td {
  height: auto;
  padding: 0;
  border-bottom: 0;
}

.data .left {
  text-align: left;
  padding-left: 3px;
}

.data th.left {
  padding-left: 6px;
}

.data .icon {
  vertical-align: top;
  padding: 0 8px 0 0;
}

.data .icon svg {
  margin: 0 auto;
}

.data .num {
  text-align: left;
}

.sort {
  display: inline-block;
  margin: 0 14px 7px 6px;
  border: 3px solid transparent;
  border-top: 0;
  border-bottom: 5px solid #7c8086;
}

.scroll-h {
  height: 26px;
  flex: none;
  display: flex;
  background: #f0f0f0;
  border-bottom: 2px solid #fafafa;
}

.scroll-h button {
  width: 26px;
}

.scroll-h .track {
  flex: 1;
}

.scroll-h .thumb {
  display: block;
  width: calc(81% - 6px);
  height: 100%;
  background: #cdcdcd;
}

.scroll-h .prev svg {
  rotate: 90deg;
}

.scroll-h .next svg {
  rotate: -90deg;
}

.statusbar {
  height: 36px;
  flex: none;
}

/* taskbar */
.taskbar {
  height: 60px;
  flex: none;
  display: flex;
  background: #1b2842;
  color: #fff;
}

.taskbar > button {
  width: 75px;
  position: relative;
}

.sys {
  display: flex;
  padding-right: 3px;
}

.sys button {
  width: 72px;
}

.taskbar .open::after,
.taskbar .current::after,
.taskbar .alert::after {
  content: "";
  position: absolute;
  left: 7px;
  right: 7px;
  bottom: 0;
  height: 3px;
  background: #76b9ed;
}

.taskbar .current {
  background: #48546b;
}

.taskbar .alert {
  background: #a66233;
}

.taskbar .current::after,
.taskbar .alert::after {
  left: 0;
  right: 0;
}

.taskbar .alert::after {
  background: #ff6a00;
}

.tray {
  margin-left: auto;
  display: flex;
  margin-right: 6px;
  border-right: 1px solid #8d95a3;
}

.tray button {
  width: 48px;
}

.tray .pen {
  width: 60px;
  background: #36435b;
}

.tray .lang {
  width: 55px;
}

.tray .clock {
  width: 114px;
  flex-direction: column;
  line-height: 28px;
}

.tray .notes {
  width: 72px;
  padding-left: 17px;
  justify-content: flex-start;
  position: relative;
}

.badge {
  position: absolute;
  left: 26px;
  top: 29px;
  width: 28px;
  height: 26px;
  line-height: 24px;
  border: 1px solid #8d95a3;
  border-radius: 50%;
  background: #2e343f;
  font-size: 16px;
  font-weight: 700;
}
```
